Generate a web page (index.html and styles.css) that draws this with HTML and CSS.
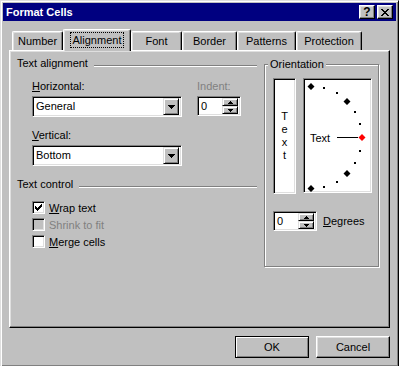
FILE: index.html
```html
<!DOCTYPE html>
<html lang="en">
<head>
    <meta charset="UTF-8">
    <title>Format Cells</title>
    <link rel="stylesheet" href="styles.css">
</head>
<body>
    <div class="window">
        <div class="titlebar">
            <span class="title">Format Cells</span>
            <div class="caption-btns">
                <span class="cap-btn help">?</span>
                <span class="cap-btn">
                    <svg width="8" height="7" viewBox="0 0 8 7"><path d="M0 0h2v1H0zM6 0h2v1H6zM1 1h2v1H1zM5 1h2v1H5zM2 2h4v1H2zM3 3h2v1H3zM2 4h4v1H2zM1 5h2v1H1zM5 5h2v1H5zM0 6h2v1H0zM6 6h2v1H6z"/></svg>
                </span>
            </div>
        </div>

        <div class="tabs">
            <span class="tab w-number">Number</span>
            <span class="tab active w-align"><span class="focus">Alignment</span></span>
            <span class="tab w-font">Font</span>
            <span class="tab w-border">Border</span>
            <span class="tab w-patterns">Patterns</span>
            <span class="tab w-protection">Protection</span>
        </div>

        <div class="panel">
            <div class="col-left">
                <div class="group-head"><span>Text alignment</span><div class="etch"></div></div>
                <div class="fields">
                    <div class="field f-wide">
                        <div class="label"><u>H</u>orizontal:</div>
                        <div class="combo sunken">
                            <span class="value">General</span>
                            <span class="drop raised">
                                <svg width="7" height="4" viewBox="0 0 7 4"><path d="M0 0h7v1H0zM1 1h5v1H1zM2 2h3v1H2zM3 3h1v1H3z"/></svg>
                            </span>
                        </div>
                    </div>
                    <div class="field f-small">
                        <div class="label disabled">Indent:</div>
                        <div class="spin sunken">
                            <span class="value">0</span>
                            <span class="spin-btns">
                                <span class="spin-btn raised"><svg width="5" height="3" viewBox="0 0 5 3"><path d="M2 0h1v1H2zM1 1h3v1H1zM0 2h5v1H0z"/></svg></span>
                                <span class="spin-btn raised"><svg width="5" height="3" viewBox="0 0 5 3"><path d="M0 0h5v1H0zM1 1h3v1H1zM2 2h1v1H2z"/></svg></span>
                            </span>
                        </div>
                    </div>
                </div>
                <div class="field f-wide f-vert">
                    <div class="label"><u>V</u>ertical:</div>
                    <div class="combo sunken">
                        <span class="value">Bottom</span>
                        <span class="drop raised">
                            <svg width="7" height="4" viewBox="0 0 7 4"><path d="M0 0h7v1H0zM1 1h5v1H1zM2 2h3v1H2zM3 3h1v1H3z"/></svg>
                        </span>
                    </div>
                </div>

                <div class="group-head head-control"><span>Text control</span><div class="etch"></div></div>
                <div class="checks">
                    <div class="check">
                        <span class="box sunken">
                            <svg width="9" height="9" viewBox="0 0 9 9"><path d="M1 3h1v3H1zM2 4h1v3H2zM3 5h1v3H3zM4 4h1v3H4zM5 3h1v3H5zM6 2h1v3H6zM7 1h1v3H7z"/></svg>
                        </span>
                        <span><u>W</u>rap text</span>
                    </div>
                    <div class="check disabled">
                        <span class="box sunken"></span>
                        <span>Shrink to fit</span>
                    </div>
                    <div class="check">
                        <span class="box sunken"></span>
                        <span><u>M</u>erge cells</span>
                    </div>
                </div>
            </div>

            <fieldset class="orient">
                <legend>Orientation</legend>
                <div class="orient-boxes">
                    <div class="vbox sunken">
                        <span>T</span><span>e</span><span>x</span><span>t</span>
                    </div>
                    <div class="dial sunken">
                        <svg width="65" height="111" viewBox="0 0 65 111">
                            <path d="M5 2L8.5 5.5 5 9 1.5 5.5zM41 17L44.5 20.5 41 24 37.5 20.5zM41 89L44.5 92.5 41 96 37.5 92.5zM5 104L8.5 107.5 5 111 1.5 107.5z"/>
                            <path d="M56 53L59.5 56.5 56 60 52.5 56.5z" fill="#f00"/>
                            <g>
                                <rect x="17" y="6" width="2" height="2"/>
                                <rect x="30" y="11" width="2" height="2"/>
                                <rect x="48" y="30" width="2" height="2"/>
                                <rect x="53" y="42" width="2" height="2"/>
                                <rect x="53" y="69" width="2" height="2"/>
                                <rect x="48" y="81" width="2" height="2"/>
                                <rect x="30" y="100" width="2" height="2"/>
                                <rect x="17" y="105" width="2" height="2"/>
                            </g>
                            <text x="4" y="60.5" class="dial-text">Text</text>
                            <rect x="31" y="56" width="21" height="1"/>
                        </svg>
                    </div>
                </div>
                <div class="degrees">
                    <div class="spin sunken">
                        <span class="value">0</span>
                        <span class="spin-btns">
                            <span class="spin-btn raised"><svg width="5" height="3" viewBox="0 0 5 3"><path d="M2 0h1v1H2zM1 1h3v1H1zM0 2h5v1H0z"/></svg></span>
                            <span class="spin-btn raised"><svg width="5" height="3" viewBox="0 0 5 3"><path d="M0 0h5v1H0zM1 1h3v1H1zM2 2h1v1H2z"/></svg></span>
                        </span>
                    </div>
                    <span class="deg-label"><u>D</u>egrees</span>
                </div>
            </fieldset>
        </div>

        <div class="actions">
            <button class="btn default">OK</button>
            <button class="btn">Cancel</button>
        </div>
    </div>
</body>
</html>
```

FILE: styles.css
```css
* { box-sizing: border-box; }
body { margin: 0; background: #c0c0c0; font-family: "Liberation Sans", Arial, sans-serif; font-size: 11px; color: #000; overflow: hidden; }

.window {
    width: 399px;
    height: 367px;
    padding: 2px;
    background: #c0c0c0;
    border: 1px solid;
    border-color: #dfdfdf #000 #000 #dfdfdf;
    box-shadow: inset 1px 1px #fff, inset -1px -1px #808080;
}

/* title bar */
.titlebar { height: 18px; background: #000080; color: #fff; display: flex; align-items: center; padding: 0 3px; }
.title { font-weight: bold; line-height: 13px; }
.caption-btns { margin-left: auto; display: flex; gap: 2px; }
.cap-btn {
    width: 16px;
    height: 14px;
    background: #c0c0c0;
    color: #000;
    display: flex;
    align-items: center;
    justify-content: center;
    border: 1px solid;
    border-color: #fff #000 #000 #fff;
    box-shadow: inset -1px -1px #808080, inset 1px 1px #dfdfdf;
}
.cap-btn svg { display: block; }
.help { font-weight: bold; font-size: 12px; line-height: 12px; }

/* 3d frames */
.raised {
    background: #c0c0c0;
    border: 1px solid;
    border-color: #dfdfdf #000 #000 #dfdfdf;
    box-shadow: inset 1px 1px #fff, inset -1px -1px #808080;
}
.sunken {
    background: #fff;
    border: 1px solid;
    border-color: #808080 #fff #fff #808080;
    box-shadow: inset 1px 1px #000, inset -1px -1px #dfdfdf;
}

/* tabs */
.tabs { display: flex; align-items: flex-end; height: 21px; margin: 8px 0 0 9px; }
.tab {
    height: 19px;
    display: flex;
    align-items: center;
    justify-content: center;
    line-height: 13px;
    border-top: 1px solid #fff;
    border-left: 1px solid #fff;
    border-right: 1px solid #000;
    border-radius: 2px 2px 0 0;
    box-shadow: inset -1px 0 #808080, inset 1px 1px #dfdfdf;
    background: #c0c0c0;
}
.tab.active { height: 22px; margin-bottom: -1px; position: relative; z-index: 1; padding-bottom: 1px; }
.focus { border: 1px dotted #000; padding: 0 2px; line-height: 14px; }
.w-number { width: 51px; }
.w-align { width: 68px; }
.w-font { width: 51px; }
.w-border { width: 55px; }
.w-patterns { width: 59px; }
.w-protection { width: 66px; }

/* panel */
.panel {
    width: 381px;
    height: 278px;
    margin-left: 6px;
    padding: 5px 0 0 7px;
    display: flex;
    align-items: flex-start;
    gap: 7px;
    border: 1px solid;
    border-color: #fff #000 #000 #fff;
    box-shadow: inset -1px -1px #808080, inset 1px 1px #dfdfdf;
}
.col-left { width: 240px; }

.group-head { display: flex; height: 15px; line-height: 15px; }
.etch { flex: 1; height: 2px; margin: 9px 0 0 6px; border-top: 1px solid #808080; border-bottom: 1px solid #fff; }
.head-control { margin-top: 11px; }

.fields { display: flex; margin-top: 8px; }
.field { margin-left: 15px; }
.f-wide { width: 150px; }
.f-small { width: 44px; }
.f-vert { margin-top: 11px; }
.label { line-height: 15px; height: 15px; margin-bottom: 2px; white-space: nowrap; }
.disabled { color: #808080; }

.combo { height: 21px; display: flex; align-items: center; padding: 2px; }
.combo .value { padding-left: 1px; line-height: 13px; }
.drop { margin-left: auto; width: 16px; height: 17px; display: flex; align-items: center; justify-content: center; }
.drop svg, .spin-btn svg, .box svg { display: block; }

.spin { width: 44px; height: 20px; display: flex; align-items: center; padding: 2px; }
.spin .value { padding-left: 1px; line-height: 13px; }
.spin-btns { margin-left: auto; display: flex; flex-direction: column; }
.spin-btn { width: 16px; height: 8px; display: flex; align-items: center; justify-content: center; }

.checks { margin-top: 9px; margin-left: 15px; display: flex; flex-direction: column; gap: 4px; }
.check { display: flex; align-items: center; height: 13px; line-height: 13px; gap: 4px; }
.check span:last-child { padding-top: 1px; }
.box { width: 13px; height: 13px; padding: 1px; }
.check.disabled .box { background: #c0c0c0; }

/* orientation */
.orient {
    width: 115px;
    margin: 2px 0 0;
    padding: 0 0 35px 8px;
    min-width: 0;
    border: 1px solid #808080;
    box-shadow: inset 1px 1px #fff, 1px 1px #fff;
}
.orient legend { padding: 0 2px; margin-left: -5px; line-height: 13px; background: #c0c0c0; }
.orient-boxes { display: flex; gap: 7px; margin-top: 7px; }
.vbox {
    width: 23px;
    height: 116px;
    display: flex;
    flex-direction: column;
    align-items: center;
    justify-content: center;
    line-height: 13px;
}
.dial { width: 69px; height: 115px; padding: 2px; }
.dial svg { display: block; }
.dial-text { font-family: "Liberation Sans", Arial, sans-serif; font-size: 11px; }

.degrees { display: flex; align-items: center; margin-top: 17px; }
.deg-label { margin-left: 6px; line-height: 13px; }

/* buttons */
.actions { width: 381px; margin: 8px 0 0 6px; display: flex; justify-content: flex-end; gap: 7px; }
.btn {
    width: 74px;
    height: 22px;
    padding: 0;
    font: inherit;
    color: #000;
    background: #c0c0c0;
    border: 1px solid;
    border-color: #fff #000 #000 #fff;
    box-shadow: inset -1px -1px #808080, inset 1px 1px #dfdfdf;
}
.btn.default { border-color: #000; box-shadow: inset 1px 1px #fff, inset -1px -1px #808080; }
```
